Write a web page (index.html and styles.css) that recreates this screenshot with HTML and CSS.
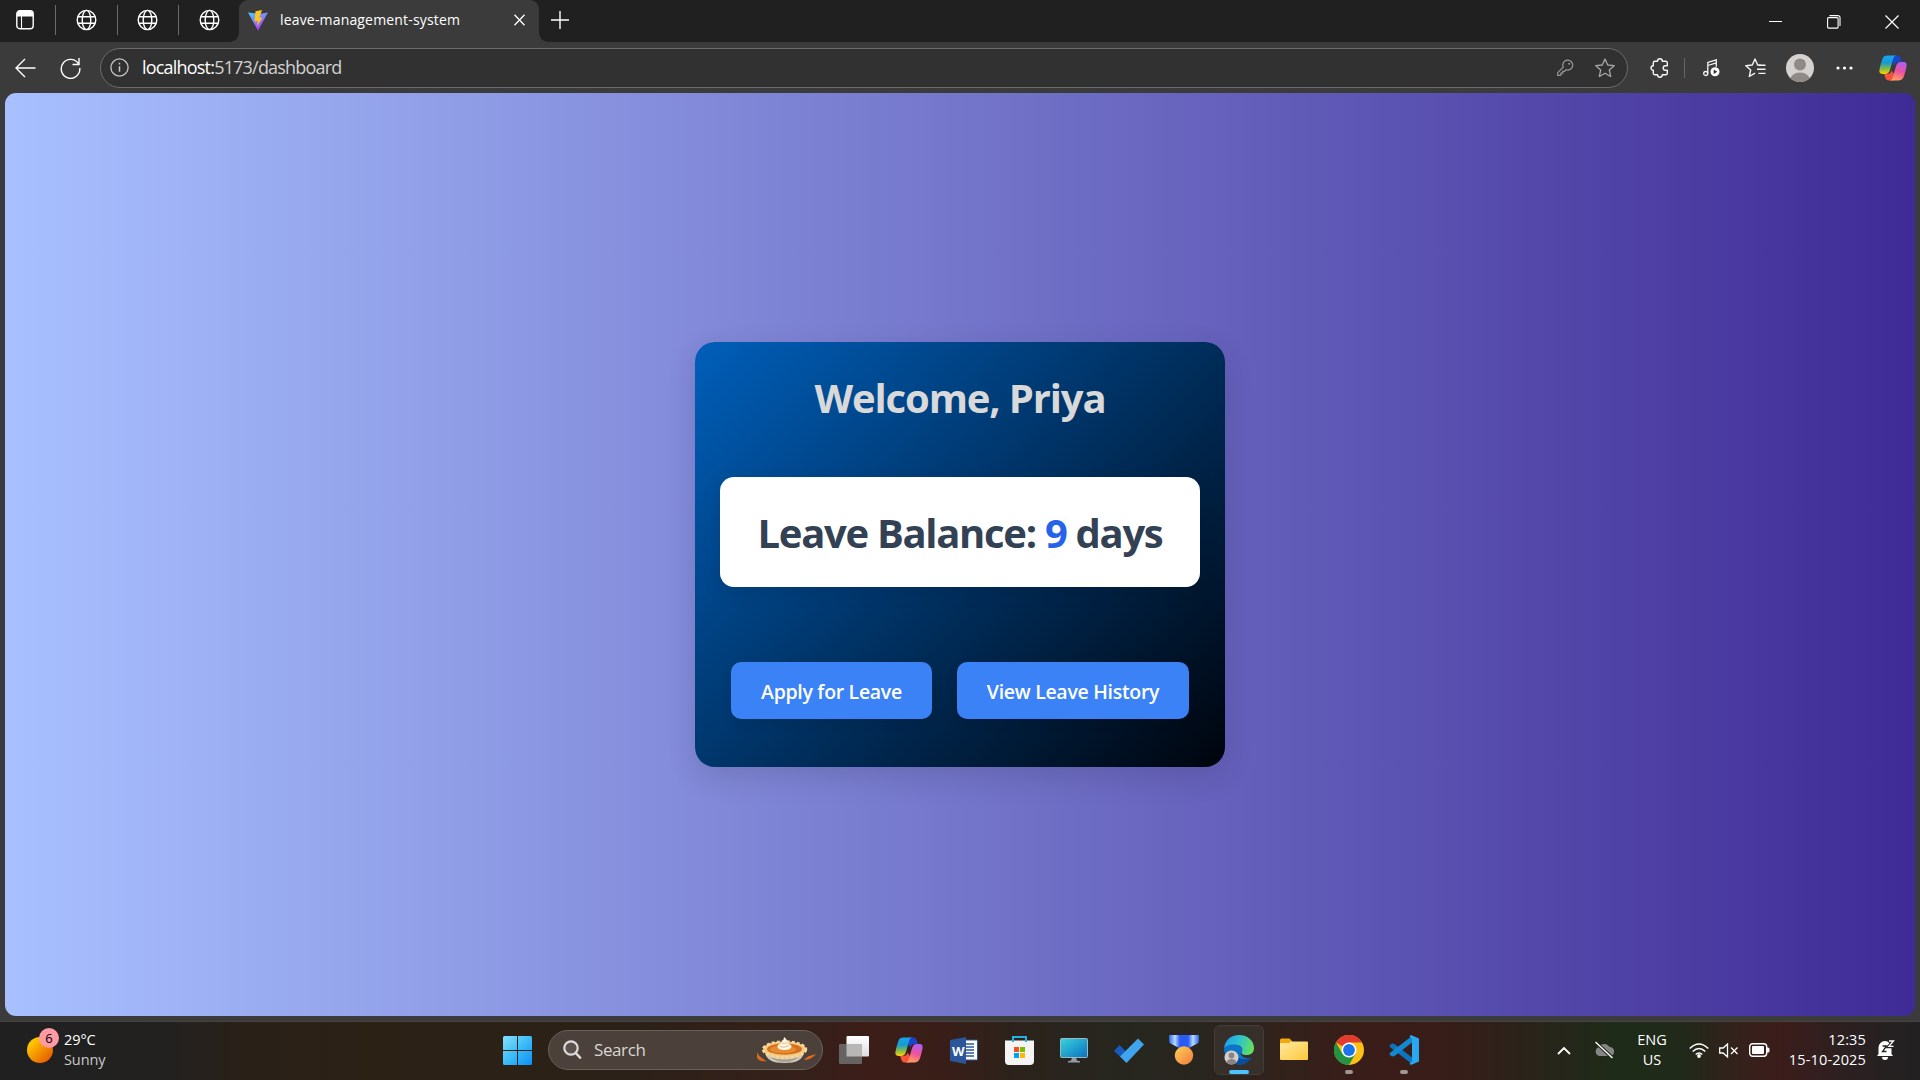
FILE: index.html
```html
<!DOCTYPE html>
<html lang="en"><head><meta charset="utf-8"><title>leave-management-system</title>
<link rel="stylesheet" href="styles.css"></head>
<body>
<svg class="defs" width="0" height="0" aria-hidden="true">
<defs>
<linearGradient id="gBlue" x1="0" y1="0" x2="0" y2="1"><stop offset="0" stop-color="#18a4f2"/><stop offset=".4" stop-color="#169bd0"/><stop offset=".7" stop-color="#7fb94e"/><stop offset="1" stop-color="#ffd100"/></linearGradient>
<linearGradient id="gPink" x1=".6" y1="0" x2=".3" y2="1"><stop offset="0" stop-color="#b25cf0"/><stop offset=".5" stop-color="#f0539a"/><stop offset="1" stop-color="#ffa45c"/></linearGradient>
<linearGradient id="gEdge" x1="0" y1=".3" x2="1" y2=".5"><stop offset="0" stop-color="#1e9fe8"/><stop offset=".5" stop-color="#2ec3cf"/><stop offset="1" stop-color="#66e05a"/></linearGradient>
<linearGradient id="gWin2" gradientUnits="userSpaceOnUse" x1="0" y1="0" x2="29" y2="29"><stop offset="0" stop-color="#86e0fb"/><stop offset=".5" stop-color="#3cbcf8"/><stop offset="1" stop-color="#0a90f8"/></linearGradient>
<linearGradient id="gVite" x1="0" y1="0" x2=".6" y2="1"><stop offset="0" stop-color="#41d1ff"/><stop offset="1" stop-color="#bd34fe"/></linearGradient>
<linearGradient id="gScreen" x1="0" y1="0" x2="1" y2="1"><stop offset="0" stop-color="#36d5dc"/><stop offset="1" stop-color="#0b6fc0"/></linearGradient>
<linearGradient id="gFolder" x1="0" y1="0" x2="1" y2="1"><stop offset="0" stop-color="#ffe9a0"/><stop offset="1" stop-color="#fdc93c"/></linearGradient>
<linearGradient id="gMedal" x1="0" y1="0" x2="1" y2="1"><stop offset="0" stop-color="#ffd057"/><stop offset="1" stop-color="#ef7a3e"/></linearGradient>
<linearGradient id="gRibbon" x1="0" y1="0" x2="1" y2="0"><stop offset="0" stop-color="#2f62e8"/><stop offset=".2" stop-color="#b9dcff"/><stop offset=".36" stop-color="#2a5cf4"/><stop offset=".64" stop-color="#2a5cf4"/><stop offset=".8" stop-color="#b9dcff"/><stop offset="1" stop-color="#2f62e8"/></linearGradient>
<linearGradient id="gWhite" x1="0" y1="0" x2="0" y2="1"><stop offset="0" stop-color="#fff"/><stop offset="1" stop-color="#dedede"/></linearGradient>
<symbol id="globe" viewBox="0 0 20 22"><g fill="none" stroke="#fff" stroke-width="1.4"><ellipse cx="10" cy="11" rx="9.3" ry="9.6"/><ellipse cx="10" cy="11" rx="4.3" ry="9.6"/><path d="M1.5 7.7h17M1.5 14.3h17"/></g></symbol>
<symbol id="copilot" viewBox="0 0 28 26">
<path d="M14 .5h4.300c2 0 3 1.500 3.600 3.300l1 3.200h-3.300c-2.500 0-3.600 1.200-4.300 3.500L12 5z" fill="#1b45c9"/>
<path d="M14 25.500H9.700c-2 0-3-1.500-3.600-3.300L5.100 19h3.300c2.500 0 3.600-1.200 4.300-3.500L16 21z" fill="#f2553a"/>
<path d="M8.600.5h8.600c-2 .3-2.600 2-3.200 4l-3 10.200C10.100 17.600 8.800 19 6 19H3.300C.8 19 0 17.200.5 14.600 1.300 10.600 2.200 7 3.400 3.900 4.300 1.500 6 .5 8.600.5z" fill="url(#gBlue)"/>
<path d="M19.400 25.500h-8.600c2-.3 2.600-2 3.200-4l3-10.200C17.900 8.400 19.200 7 22 7h2.700c2.500 0 3.300 1.800 2.800 4.400-.8 4-1.700 7.600-2.900 10.700-.9 2.400-2.600 3.400-5.200 3.400z" fill="url(#gPink)"/></symbol>
</defs></svg>

<header class="tabs">
  <div class="pinned workspace"><svg width="18" height="20" viewBox="0 0 18 20"><rect x=".8" y=".8" width="16.400" height="17.900" rx="3" fill="none" stroke="#fff" stroke-width="1.400"/><path d="M1 6.500V4a3 3 0 0 1 3-3h10a3 3 0 0 1 3 3v2.500z" fill="#fff"/><path d="M5.500 6v12.500" stroke="#fff" stroke-width="1.100"/></svg></div>
  <div class="pinned"><svg width="21" height="22"><use href="#globe"/></svg></div>
  <div class="pinned"><svg width="21" height="22"><use href="#globe"/></svg></div>
  <div class="pinned last"><svg width="21" height="22"><use href="#globe"/></svg></div>
  <div class="tab">
    <svg width="20" height="21" viewBox="0 0 20 21"><path d="M0 2.500 10 20.500 20 2.500 11.500 4z" fill="url(#gVite)"/><path d="M14 0 7.500 1.300 6.500 11.500l3.300-.6-.8 5.300 5.600-8.700-3.200.5z" fill="#ffc51f"/></svg>
    <span class="tab-title">leave-management-system</span>
    <svg class="tab-close" width="11" height="12" viewBox="0 0 11 12"><path d="M.5.800l10 10.400M10.500.800.500 11.200" stroke="#fff" stroke-width="1.300"/></svg>
  </div>
  <svg class="new-tab" width="18" height="18" viewBox="0 0 18 18"><path d="M9 0v18M0 9h18" stroke="#fff" stroke-width="1.400"/></svg>
  <div class="window-controls">
    <svg width="14" height="14" viewBox="0 0 14 14"><path d="M0 6.500h13" stroke="#fff"/></svg>
    <svg width="14" height="14" viewBox="0 0 14 14"><g fill="none" stroke="#fff" stroke-width="1.100"><rect x=".6" y="2.600" width="10.500" height="10.500" rx="1"/><path d="M2.500.6h8.500a2 2 0 0 1 2 2V11"/></g></svg>
    <svg width="14" height="14" viewBox="0 0 14 14"><path d="M.5.500l13 13M13.500.500l-13 13" stroke="#fff" stroke-width="1.200"/></svg>
  </div>
</header>

<nav class="toolbar">
  <svg class="back" width="21" height="20" viewBox="0 0 21 20"><path d="M20.500 10H1M10 1 1 10l9 9" fill="none" stroke="#fff" stroke-width="1.400"/></svg>
  <svg class="reload" width="21" height="22" viewBox="0 0 21 22"><path d="M18.800 7.500A9.300 9.500 0 1 0 19.800 11M19 1v6.500h-6.500" fill="none" stroke="#fff" stroke-width="1.400"/></svg>
  <div class="address">
    <svg width="19" height="19" viewBox="0 0 19 19"><circle cx="9.500" cy="9.500" r="8.600" fill="none" stroke="#c8c8c8" stroke-width="1.300"/><path d="M9.500 8.200v5.600M9.500 4.800v1.800" stroke="#c8c8c8" stroke-width="1.500"/></svg>
    <span class="url"><b>localhost:</b>5173/dashboard</span>
    <svg class="key" width="17" height="17" viewBox="0 0 17 17"><path d="M6.200 8.200A5 5 0 1 1 9 10.800l-1.500 1.500H5.800v1.800H4v1.700L3.400 16.300H.7v-2.600z" fill="none" stroke="#9a9a9a" stroke-width="1.200"/><circle cx="12.200" cy="4.800" r="1" fill="#9a9a9a"/></svg>
    <svg width="20" height="20" viewBox="0 0 20 20"><path d="M10 1l2.700 6 6.500.7-4.900 4.300 1.400 6.500-5.700-3.300-5.700 3.300L5.700 12 .8 7.700 7.300 7z" fill="none" stroke="#a6a6a6" stroke-width="1.300" stroke-linejoin="round"/></svg>
  </div>
  <div class="tools">
    <svg width="19" height="20" viewBox="0 0 19 20"><path d="M4.500 3.200h2.700a2.400 2.400 0 0 1 4.800 0h3.500a1.500 1.500 0 0 1 1.500 1.500v3h-1.800a2.300 2.300 0 0 0 0 4.600H17v3a1.500 1.500 0 0 1-1.500 1.500H12a2.400 2.400 0 0 1-4.800 0H4.500A1.500 1.500 0 0 1 3 15.300v-3a2.300 2.300 0 0 1 0-4.600v-3a1.500 1.500 0 0 1 1.500-1.500z" transform="translate(.3)" fill="none" stroke="#f4f4f4" stroke-width="1.400" stroke-linejoin="round"/></svg>
    <i class="divider"></i>
    <svg class="music" width="17" height="18" viewBox="0 0 17 18"><g fill="none" stroke="#f4f4f4" stroke-width="1.300"><circle cx="2.700" cy="14.500" r="2"/><path d="M4.800 14.500V3.500l8.500-2.700v7M4.800 6.500l8.500-2.700"/></g><circle cx="12" cy="12.800" r="4.500" fill="#fff"/><path d="M10.700 10.500v4.600l3.600-2.300z" fill="#333"/></svg>
    <svg class="favs" width="21" height="20" viewBox="0 0 21 20"><path d="M15.800 7.200 12.700 7 10 1 7.300 7 .8 7.700 5.700 12l-1.400 6.500L10 15.200" fill="none" stroke="#f4f4f4" stroke-width="1.400" stroke-linejoin="round"/><path d="M13.500 7.200h7M12 11.300h8.500M13.500 15.400h7" stroke="#f4f4f4" stroke-width="1.400"/></svg>
    <svg class="avatar" width="28" height="28" viewBox="0 0 28 28"><clipPath id="av"><circle cx="14" cy="14" r="14"/></clipPath><g clip-path="url(#av)"><path d="M0 0h28v28H0z" fill="#d4d1ce"/><circle cx="14" cy="10.500" r="6" fill="#8f8a87"/><ellipse cx="14" cy="26" rx="10" ry="7.500" fill="#8f8a87"/></g></svg>
    <svg class="more" width="17" height="4" viewBox="0 0 17 4"><g fill="#fff"><circle cx="2" cy="2" r="1.600"/><circle cx="8.500" cy="2" r="1.600"/><circle cx="15" cy="2" r="1.600"/></g></svg>
    <svg class="copilot" width="28" height="26"><use href="#copilot"/></svg>
  </div>
</nav>

<main class="page">
  <section class="card">
    <h1>Welcome, Priya</h1>
    <div class="balance">Leave Balance: <span>9</span> days</div>
    <div class="actions"><button class="apply">Apply for Leave</button><button class="history">View Leave History</button></div>
  </section>
</main>

<footer class="taskbar">
  <div class="weather">
    <div class="sun"><span class="badge">6</span></div>
    <div class="weather-text"><span>29°C</span><span class="dim">Sunny</span></div>
  </div>
  <div class="apps">
    <svg class="start" width="29" height="29" viewBox="0 0 29 29"><path fill="url(#gWin2)" d="M1.500 0H14v14H0V1.500A1.500 1.500 0 0 1 1.500 0zM15 0h12.500A1.500 1.500 0 0 1 29 1.500V14H15zM0 15h14v14H1.500A1.500 1.500 0 0 1 0 27.500zM15 15h14v12.500a1.500 1.500 0 0 1-1.500 1.500H15z"/></svg>
    <div class="search">
      <svg width="19" height="20" viewBox="0 0 19 20"><circle cx="8" cy="8" r="6.700" fill="#ffffff18" stroke="#dcdcdc" stroke-width="2.200"/><path d="m12.800 13 5 5.500" stroke="#dcdcdc" stroke-width="2.500"/></svg>
      <span>Search</span>
      <svg class="pie" width="60" height="27" viewBox="0 0 60 27"><path d="M1 15q1 4 10 9.500-9 0-10-4zM60 17q-4 5.500-12 6 2-4 12-6z" fill="#e0691d"/><path d="M9 15h39c-1 8-8 11-19.500 11S10 23 9 15z" fill="#d3cab9"/><path d="M14 20q14 5 29 0-5 5-14.500 5T14 20z" fill="#a79f90"/><ellipse cx="28.500" cy="12.500" rx="21.500" ry="8" fill="#f3cb83" stroke="#f7d898" stroke-width="2.500" stroke-dasharray="3 2"/><ellipse cx="28.500" cy="12" rx="17.500" ry="5.800" fill="#d5701c"/><ellipse cx="27" cy="12.500" rx="13" ry="3.800" fill="#e68b31"/><path d="M21.500 9.500c0-2.500 2.500-2 3.500-3.500s3-3 3-6c3 2 3 4 4 6s3.500 1 3.500 3.500-3.500 3.500-7 3.500-7-1-7-3.500z" fill="#fff5df"/><path d="M23.500 9.500q5 2 9.500-1M25.500 6q3 1.500 5.500-.5" fill="none" stroke="#d9bf95"/></svg>
    </div>
    <div class="app"><svg width="30" height="28" viewBox="0 0 30 28"><rect x="7.500" width="22.500" height="20.500" rx="1" fill="url(#gWhite)"/><rect y="8" width="23" height="20" rx="1" fill="#666463"/><path d="M7.500 8H23v12.500H7.500z" fill="#b9b7b6"/></svg></div>
    <div class="app"><svg width="28" height="26"><use href="#copilot"/></svg></div>
    <div class="app"><svg width="28" height="27" viewBox="0 0 28 27"><path d="M14 3h13.500v20H14z" fill="#fff" stroke="#2b579a"/><path d="M16 7h8M16 10h8M16 13h8M16 16h8M16 19h8" stroke="#2b579a" stroke-width="1.600"/><path d="M0 3 16 0v27L0 24z" fill="#2b579a"/><text x="2" y="18.500" class="word">W</text></svg></div>
    <div class="app"><svg width="29" height="29" viewBox="0 0 29 29"><path d="M0 4.500h29V25a4 4 0 0 1-4 4H4a4 4 0 0 1-4-4z" fill="#f4f4f4"/><path d="M8 6V1h13v5" fill="none" stroke="#20b4e4" stroke-width="2"/><path d="M9 11h5v5H9z" fill="#f25022"/><path d="M15 11h5v5h-5z" fill="#7fba00"/><path d="M9 17h5v5H9z" fill="#00a4ef"/><path d="M15 17h5v5h-5z" fill="#ffb900"/></svg></div>
    <div class="app"><svg width="28" height="25" viewBox="0 0 28 25"><path d="M10 23q2-1 2-4h4q0 3 2 4h2v1.500H8V23z" fill="#929ba5"/><rect x=".5" y=".5" width="27" height="19" rx="1" fill="url(#gScreen)" stroke="#9cb8bd"/></svg></div>
    <div class="app"><svg width="30" height="25" viewBox="0 0 30 25"><path d="m0 13 5.500-6 7 7-5.500 5.500z" fill="#185abd"/><path d="m6 18.500 18-18 6 6L12.500 25z" fill="#41a5ee"/></svg></div>
    <div class="app"><svg width="30" height="30" viewBox="0 0 30 30"><path d="M0 0h30v6a3 3 0 0 1-1.500 2.500L20 13H10L1.500 8.500A3 3 0 0 1 0 6z" fill="url(#gRibbon)"/><circle cx="15" cy="20.500" r="9.200" fill="url(#gMedal)"/></svg></div>
    <div class="app active"><svg width="30" height="30" viewBox="0 0 30 30"><path d="M0 15C0 10 6 8 11 9c5 1 8 4 7.500 7l-2 2c1 5 7 6.500 11 4A15 15 0 0 1 0 15z" fill="#0d73c9"/><path d="M11 16c-1 8 8 10 16.500 6.500A15 15 0 0 1 13 30Q7 23 11 16z" fill="#0c4c98"/><path d="M0 13.500C1 5 7 0 15 0c9 0 15 6 15 13 0 4.500-3 7-7.500 7-4 0-6-1.500-4.500-3.500C20 13 15.500 9 10 9.500c-5 0-9 2-10 4z" fill="url(#gEdge)"/><circle cx="7.500" cy="22.500" r="7" fill="#d2cfcc"/><circle cx="7.500" cy="20.500" r="2.900" fill="#8a8582"/><path d="M2.500 27q1-3 5-3t5 3q-2 2.500-5 2.500t-5-2.500z" fill="#8a8582"/></svg><i class="running"></i></div>
    <div class="app"><svg class="folder" width="28" height="22" viewBox="0 0 28 22"><path d="M0 2a1.500 1.500 0 0 1 1.500-1.500H9q1 0 1.500 1L12 3v4H0z" fill="#f5a80b"/><path d="M0 6q0-1 1-1h8l2-1.500h16q1 0 1 1V21q0 1-1 1H1q-1 0-1-1z" fill="url(#gFolder)"/></svg></div>
    <div class="app"><svg width="30" height="30" viewBox="0 0 30 30"><circle cx="15" cy="15" r="15" fill="#fbc116"/><path d="M15 15 2 7.500A15 15 0 0 1 28 7.500H15z" fill="#e33b2e"/><path d="M2 7.500A15 15 0 0 0 15 30l6.500-11.200L15 15l-6.500 3.700z" fill="#229342"/><circle cx="15" cy="15" r="7.500" fill="#fff"/><circle cx="15" cy="15" r="5.900" fill="#1a73e8"/></svg><i class="running idle"></i></div>
    <div class="app"><svg width="30" height="30" viewBox="0 0 30 30"><path d="M.5 10.500 3 8.500l2.500.5L23 22.500V29L.8 12z" fill="#0c74bd"/><path d="M.5 19.500 3 21.500l2.500-.5L23 7.500V1L.8 18z" fill="#108ad3"/><path d="m22 0 8 3.500v23L22 30l-1.500-1.500L23 26V4L20.500 1.500z" fill="#29a8f0"/></svg><i class="running idle"></i></div>
  </div>
  <div class="tray">
    <svg class="chevron" width="14" height="9" viewBox="0 0 14 9"><path d="m1 8 6-6 6 6" fill="none" stroke="#fff" stroke-width="1.800"/></svg>
    <svg class="cloud" width="20" height="18" viewBox="0 0 20 18"><path d="M5 15a4.700 4.700 0 0 1 0-9 6 6 0 0 1 10.500 0A4.500 4.500 0 0 1 16 15z" fill="#858585"/><path d="m1.500 1 17 16" stroke="#252b20" stroke-width="3.500"/><path d="m1.500 1 17 16" stroke="#fff" stroke-width="1.400"/></svg>
    <div class="lang"><span>ENG</span><span>US</span></div>
    <svg class="wifi" width="20" height="15" viewBox="0 0 20 15"><g fill="none" stroke="#fff" stroke-width="1.500"><path d="M.7 5.500q9.300-9 18.600 0M3.700 8.500q6.300-6 12.600 0M6.700 11.500q3.300-3 6.600 0"/></g><circle cx="10" cy="13" r="1.900" fill="#fff"/></svg>
    <svg class="sound" width="20" height="15" viewBox="0 0 20 15"><path d="M.7 5h3.500L8.500 1v13L4.200 10H.7zM12 4.500l6.500 6.500M18.500 4.500 12 11" fill="none" stroke="#fff" stroke-width="1.300"/></svg>
    <svg class="battery" width="21" height="14" viewBox="0 0 21 14"><rect x=".7" y=".7" width="17" height="12.600" rx="3" fill="none" stroke="#fff" stroke-width="1.400"/><rect x="3" y="3" width="12" height="8" rx="1" fill="#fff"/><path d="M18 4.500h1a1.500 1.500 0 0 1 1.500 1.500v2A1.500 1.500 0 0 1 19 9.500h-1z" fill="#fff"/></svg>
    <div class="clock"><span>12:35</span><span>15-10-2025</span></div>
    <svg class="bell" width="18" height="20" viewBox="0 0 18 20"><path d="M1.500 14V7.500a6.500 6.500 0 0 1 6.500-6.500 7 7 0 0 1 6.500 6.500V14l1.500 2H0zM5 17h6a3 3 0 0 1-6 0z" fill="#fff"/><path d="M5.500 6h4l-4 5.500h4" fill="none" stroke="#292222" stroke-width="1.300"/><path d="M11.500.7h5l-5 6h5" fill="none" stroke="#292222" stroke-width="3"/><path d="M12 1h4.500L12 6.300h4.500" fill="none" stroke="#fff" stroke-width="1.300"/></svg>
  </div>
</footer>
</body></html>
```
FILE: styles.css
```css
* { box-sizing: border-box; }
body { margin: 0; width: 1920px; height: 1080px; display: flex; flex-direction: column; overflow: hidden; background: #3b3b3b; color: #fff; font-family: "Open Sans", "Noto Sans", sans-serif; }
svg { display: block; flex: none; }
.defs { position: absolute; }
i { display: block; }

.tabs { height: 42px; flex: none; display: flex; align-items: center; background: #202020; padding-bottom: 2px; }
.pinned { width: 61.500px; height: 30px; display: flex; align-items: center; justify-content: center; border-right: 1px solid #6b6b6b; }
.workspace { width: 56px; padding-right: 6px; }
.pinned.last { border: 0; width: 60px; }
.tab { position: relative; height: 42px; align-self: flex-start; width: 300px; background: #3b3b3b; border-radius: 9px 9px 0 0; display: flex; align-items: center; padding: 0 14px 2px 9px; }
.tab::before, .tab::after { content: ""; position: absolute; bottom: 0; width: 9px; height: 9px; }
.tab::before { left: -9px; background: radial-gradient(circle at 0 0, transparent 8.500px, #3b3b3b 9px); }
.tab::after { right: -9px; background: radial-gradient(circle at 100% 0, transparent 8.500px, #3b3b3b 9px); }
.tab-title { font-size: 14px; margin-left: 12px; letter-spacing: .17px; white-space: nowrap; padding-bottom: 1px; }
.tab-close { margin-left: auto; }
.new-tab { margin-left: 12px; }
.window-controls { margin-left: auto; margin-right: 21px; display: flex; gap: 44px; padding-top: 3px; }

.toolbar { height: 51px; flex: none; display: flex; align-items: center; padding-left: 15px; }
.reload { margin-left: 24px; }
.address { width: 1528px; height: 40px; margin-left: 19px; border: 1px solid #6b6b6b; border-radius: 20px; background: #313131; display: flex; align-items: center; padding: 0 12px 0 9px; }
.url { font-size: 18px; color: #d2d2d2; margin-left: 13px; letter-spacing: -.8px; line-height: 24px; padding-bottom: 2px; }
.url b { font-weight: 400; color: #fff; }
.key { margin: 0 21px 0 auto; }
.tools { display: flex; align-items: center; margin-left: 22px; }
.divider { width: 1px; height: 20px; background: #666; margin-left: 15px; }
.music { margin-left: 18px; }
.favs { margin-left: 25px; }
.avatar { margin-left: 20px; }
.more { margin-left: 22px; }
.copilot { margin-left: 26px; }

.page { width: 1910px; height: 923px; flex: none; margin: 0 5px; border-radius: 11px; background: linear-gradient(90deg, #a8c0ff, #3f2b96); display: flex; align-items: center; justify-content: center; }
.card { width: 530px; height: 425px; border-radius: 20px; background: linear-gradient(135deg, #005fba, #00040c); box-shadow: 0 10px 30px rgba(0, 0, 0, .12); padding: 25px; display: flex; flex-direction: column; align-items: center; }
h1 { margin: 0; padding-top: 1px; height: 110px; font-size: 40px; line-height: 60px; font-weight: 700; color: #d9d9d9; letter-spacing: -1.150px; }
.balance { width: 480px; height: 110px; border-radius: 14px; background: #fff; color: #334155; font-size: 40px; font-weight: 700; line-height: 110px; padding-top: 1px; text-align: center; white-space: nowrap; letter-spacing: -1.300px; box-shadow: 0 4px 20px rgba(0, 0, 0, .1); }
.balance span { color: #2563eb; }
.actions { margin-top: 75px; display: flex; gap: 25px; }
button { height: 57px; border: 0; border-radius: 10px; background: #3b82f6; color: #fff; font: 600 19.500px/24px "Open Sans", "Noto Sans", sans-serif; letter-spacing: -.3px; padding: 3px 0 0; white-space: nowrap; box-shadow: 0 4px 12px rgba(0, 0, 0, .1); }
.apply { width: 201px; }
.history { width: 232px; }

.taskbar { height: 59px; flex: none; margin-top: 5px; border-top: 1px solid #494340; padding-bottom: 2px; display: flex; align-items: center; background: linear-gradient(90deg, #202020 0, #222120 160px, #292018 250px, #2b2115 370px, #2c2118 640px, #35201a 800px, #3c1d18 870px, #381e18 950px, #2b231c 1020px, #26261f 1120px, #29251f 1200px, #33211b 1290px, #3a1c18 1380px, #371d18 1450px, #29241b 1530px, #1e2b18 1620px, #20291a 1680px, #35211c 1740px, #3b1d1b 1780px, #2b2021 1850px, #212121 1920px); }
.weather { width: 501px; padding-left: 27px; display: flex; align-items: center; }
.sun { position: relative; width: 26px; height: 26px; border-radius: 50%; background: linear-gradient(135deg, #ffc400 20%, #e66000 85%); }
.badge { position: absolute; left: 12px; top: -9px; width: 20px; height: 20px; border-radius: 50%; background: #ff99a4; color: #000; font-size: 13px; line-height: 20px; text-align: center; }
.weather-text { display: flex; flex-direction: column; margin-left: 11px; font-size: 14.500px; line-height: 20px; letter-spacing: -.1px; }
.dim { color: #c9c9c9; }
.apps { display: flex; align-items: center; }
.start { margin-left: 2px; }
.search { width: 275px; height: 40px; margin: 0 6px 0 16px; border: 1px solid #67605b; border-radius: 20px; background: #4b413a; display: flex; align-items: center; padding: 0 6px 0 14px; }
.search span { font-size: 17px; color: #d8d5d3; margin-left: 12px; padding-bottom: 1px; letter-spacing: -.4px; }
.pie { margin-left: auto; }
.app { position: relative; width: 50px; height: 50px; margin-right: 5px; border: 1px solid transparent; border-radius: 6px; display: flex; align-items: center; justify-content: center; }
.active { background: #37302a; border-color: #443d37; }
.running { position: absolute; bottom: 0; left: 14px; width: 20px; height: 4px; border-radius: 2px; background: #4cc2ff; }
.idle { left: 20px; width: 8px; background: #a19693; }
.word { font: 700 13px "Open Sans", sans-serif; fill: #fff; }
.folder { margin-bottom: 2px; }
.tray { flex: 1; display: flex; align-items: center; justify-content: flex-end; padding-right: 25px; font-size: 14.500px; line-height: 20px; }
.tray svg { margin-right: 10px; }
.tray .chevron { margin-right: 23px; }
.tray .cloud { margin-right: 23px; }
.lang, .clock { display: flex; flex-direction: column; align-items: center; }
.lang { margin-right: 22px; }
.clock { align-items: flex-end; margin-left: 9px; margin-right: 11px; letter-spacing: .15px; }
.tray .bell { margin-right: 0; }
```
